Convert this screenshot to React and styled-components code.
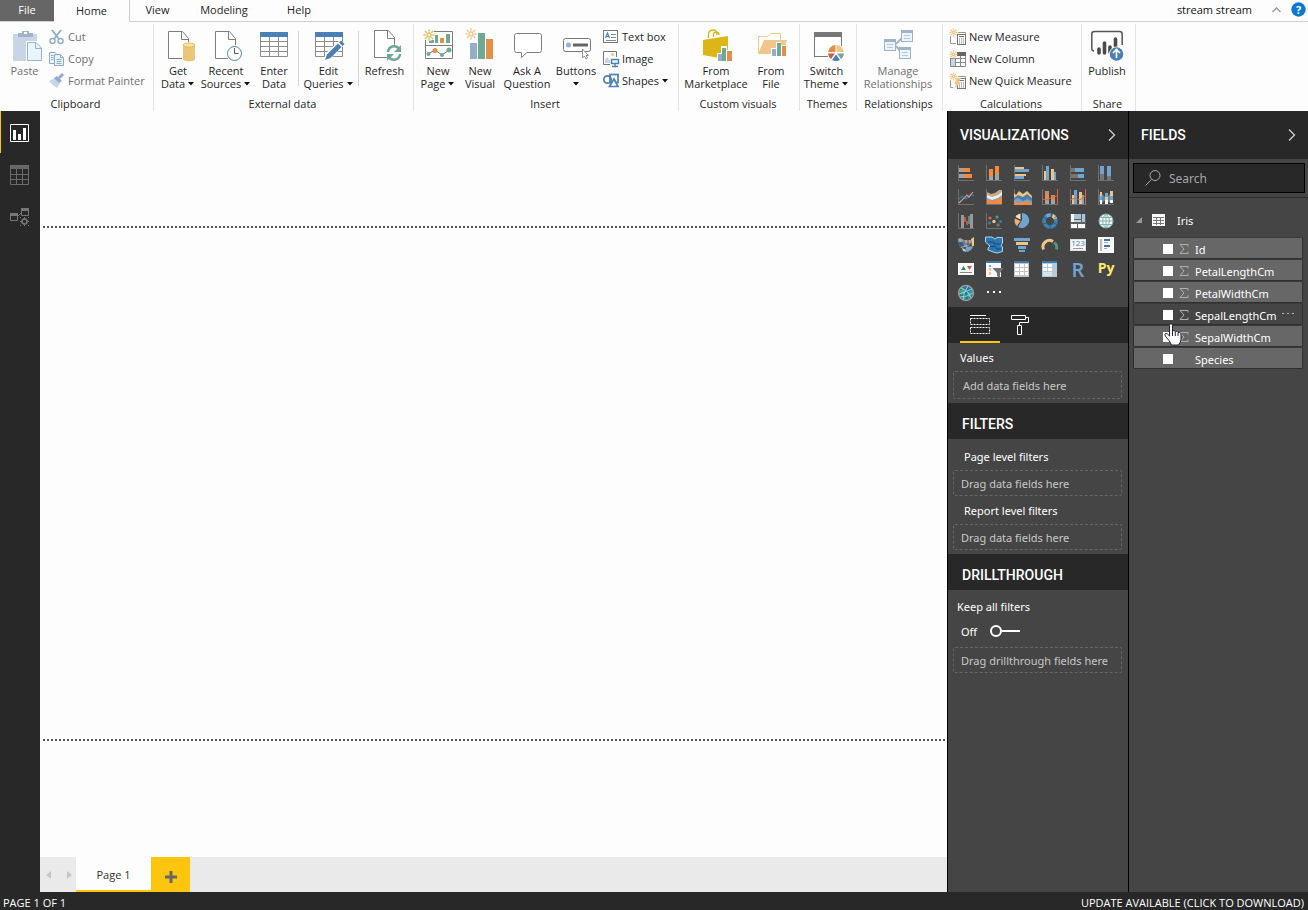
import React from 'react';
import styled, { createGlobalStyle } from 'styled-components';

const GlobalStyle = createGlobalStyle`
    *, *::before, *::after {
        box-sizing: border-box;
    }
    body {
        margin: 0;
        background: #fdfdfd;
        color: #1f1f1f;
        font-family: "Open Sans", "Noto Sans", sans-serif;
        font-size: 11px;
        line-height: 13px;
    }
    button, input {
        font: inherit;
        color: inherit;
        margin: 0;
        padding: 0;
        border: 0;
        background: none;
    }
    svg {
        display: block;
        flex: none;
        overflow: visible;
    }
`;

/* ---------- icon helpers ---------- */

// each bar is [x, y, width, height, colour]
const Bars = ({ items }) =>
    items.map(([x, y, w, h, fill], i) => (
        <rect key={i} x={x} y={y} width={w} height={h} fill={fill} />
    ));

const Icon = ({ size = 16, bars = [], children }) => (
    <svg width={size} height={size} viewBox={`0 0 ${size} ${size}`} aria-hidden="true">
        <Bars items={bars} />
        {children}
    </svg>
);

const Sun = ({ x, y, r = 5, color = '#e9bf55' }) => (
    <g stroke={color} fill="none" strokeWidth="1.4">
        <circle cx={x} cy={y} r={r * 0.4} />
        {[0, 45, 90, 135, 180, 225, 270, 315].map((a) => (
            <path key={a} d={`M${r * 0.65} 0H${r * 1.15}`} transform={`translate(${x} ${y}) rotate(${a})`} />
        ))}
    </g>
);

const Doc = ({ x, y }) => (
    <g transform={`translate(${x} ${y})`} fill="#fff" stroke="#7d7d7d">
        <path d="M.5 .5H14.5L20.5 7.5V27.5H.5Z" />
        <path d="M13.5 .5V8.5H20.5" fill="none" />
    </g>
);

const Caret = () => (
    <svg width="7" height="4" viewBox="0 0 7 4" aria-hidden="true">
        <path d="M0 0H6L3 3.5Z" fill="#111" />
    </svg>
);

const Chevron = () => (
    <svg width="8" height="12" viewBox="0 0 8 12" aria-hidden="true">
        <path d="M1 .5L6.5 6L1 11.5" fill="none" stroke="#cfcfcf" strokeWidth="1.3" />
    </svg>
);

/* ---------- ribbon icons ---------- */

const GREEN = '#6fa894';
const BLUE = '#4a80b5';
const SKY = '#93aecb';
const ORANGE = '#e58e48';
const SAND = '#efc78a';

const PasteIcon = () => (
    <Icon size={32}>
        <path d="M4 4H28V31H4Z" fill="#c9d5e6" />
        <path d="M9 7V3H13V1H20V3H24V7Z" fill="#9fb3cb" />
        <rect x="15" y="2" width="3" height="2" fill="#fff" />
        <path d="M17 11H28V31H17Z" fill="#fdfdfd" />
        <path d="M18.5 12.5H27L32.5 18V30.5H18.5Z" fill="#e9f5fe" stroke="#9db1cb" />
        <path d="M26.5 12.5V18.5H32" fill="none" stroke="#9db1cb" />
    </Icon>
);

const GetDataIcon = () => (
    <Icon size={32}>
        <Doc x={6} y={1} />
        <path d="M20 14Q27 10 34 14V31H20Z" fill="#fff" />
        <path d="M21 15V29C21 32 33 32 33 29V15Z" fill="#ebc677" />
        <ellipse cx="27" cy="15" rx="6" ry="2" fill="#f7e3ae" stroke="#e5b95e" />
    </Icon>
);

const RecentIcon = () => (
    <Icon size={32}>
        <Doc x={5} y={1} />
        <circle cx="24.5" cy="23.5" r="8.5" fill="#fff" />
        <circle cx="24.5" cy="23.5" r="7" fill="#fff" stroke={BLUE} />
        <path d="M24.5 18V23.5H28.5" fill="none" stroke="#555" />
    </Icon>
);

const Grid = () => (
    <g>
        <path d="M2.5 6V26.5H29.5V6M3 11.5H29M3 16.5H29M3 21.5H29M11.5 6V26M20.5 6V26" fill="#fff" stroke="#8c8c8c" />
        <rect x="2" y="2" width="28" height="5" fill={BLUE} />
    </g>
);

const EnterIcon = () => (
    <Icon size={32}>
        <Grid />
    </Icon>
);

const EditIcon = () => (
    <Icon size={32}>
        <Grid />
        <path d="M10 31L13 23L27 10L32 14L18 28Z" fill="#fff" />
        <path d="M12 30L14 24.5L25 13.5L28.5 17L17.5 28Z" fill={BLUE} />
        <path d="M26 12.5L28 10.5L31.5 14L29.5 16Z" fill={BLUE} />
    </Icon>
);

const RefreshIcon = () => (
    <Icon size={32}>
        <Doc x={5} y={0} />
        <circle cx="25" cy="23" r="8.5" fill="#fff" />
        <g fill="none" stroke={GREEN} strokeWidth="2.5">
            <path d="M19 22A6 6 0 0 1 30 19" />
            <path d="M31 24A6 6 0 0 1 20 27" />
        </g>
        <path d="M32 15V22H25ZM18 31V24H25Z" fill={GREEN} />
    </Icon>
);

const NewPageIcon = () => (
    <Icon size={32}>
        <path d="M3.5 1.5H30.5V28.5H3.5ZM3 15.5H31" fill="#fff" stroke="#7d7d7d" />
        <Bars items={[[13, 5, 3, 8, GREEN], [7, 10, 5, 3, GREEN], [18, 8, 4, 5, ORANGE], [24, 4, 4, 9, GREEN]]} />
        <path d="M6 24L13 20L20 25L27 20" fill="none" stroke="#777" />
        <circle cx="6.5" cy="24" r="2" fill={GREEN} />
        <circle cx="13" cy="20.5" r="2.5" fill={ORANGE} />
        <circle cx="20" cy="25" r="2" fill={GREEN} />
        <circle cx="27" cy="20" r="2.5" fill={GREEN} />
        <circle cx="7" cy="5" r="6" fill="#fff" />
        <Sun x={7} y={5} />
    </Icon>
);

const NewVisualIcon = () => (
    <Icon size={32} bars={[[6, 13, 7, 16, SKY], [14, 3, 7, 26, GREEN], [22, 9, 7, 20, ORANGE]]}>
        <Sun x={7} y={4} color={SAND} />
    </Icon>
);

const AskIcon = () => (
    <Icon size={32}>
        <path d="M5.5 3.5H28.5Q30.5 3.5 30.5 5.5V20.5Q30.5 22.5 28.5 22.5H16L10.5 27.5V22.5H5.5Q3.5 22.5 3.5 20.5V5.5Q3.5 3.5 5.5 3.5Z" fill="#fff" stroke="#7d7d7d" />
    </Icon>
);

const ButtonsIcon = () => (
    <Icon size={32}>
        <rect x="3.5" y="8.5" width="27" height="13" rx="2" fill="#fff" stroke="#777" />
        <circle cx="8.5" cy="15" r="2.5" fill="#8eb3d6" />
        <rect x="13" y="13.5" width="15" height="3" fill="#666" />
        <path d="M22.5 19V28L24.5 26L26 29L27.5 28L26 25.5H28.5Z" fill="#fff" stroke="#777" strokeWidth=".8" />
    </Icon>
);

const MarketIcon = () => (
    <Icon size={32}>
        <path d="M3 10L28 6V28L19 28L3 25Z" fill="#dcb516" />
        <path d="M8.5 8V4Q9 0 13 0Q17 0 17 5M13.5 7V4Q14 2 16 2Q19 2 19 5" fill="none" stroke="#dcb516" strokeWidth="1.4" />
        <Bars items={[[17, 23, 5, 8, '#fff'], [21, 16, 6, 15, '#fff'], [26, 20, 7, 11, '#fff'], [18, 24, 4, 7, SKY], [22, 18, 4, 13, GREEN], [27, 21, 5, 10, ORANGE]]} />
    </Icon>
);

const FileVisualIcon = () => (
    <Icon size={32}>
        <path d="M3.5 23V6.5H13L16 3.5H25.5V10" fill="#fff" stroke={SAND} />
        <path d="M3 24L9 10H32L28 24Z" fill={SAND} />
        <Bars items={[[16, 18, 6, 9, '#fff'], [21, 12, 5, 15, '#fff'], [26, 15, 6, 12, '#fff'], [17, 19, 4, 7, SKY], [22, 13, 4, 13, GREEN], [27, 16, 4, 10, ORANGE]]} />
    </Icon>
);

const ThemeIcon = () => (
    <Icon size={32}>
        <rect x="3.5" y="4.5" width="27" height="22" fill="#fff" stroke="#777" />
        <rect x="3" y="2" width="28" height="5" fill="#777" />
        <circle cx="25" cy="23" r="9" fill="#fff" />
        <path d="M25.5 22V15A8 8 0 0 1 33 22Z" fill={SAND} />
        <path d="M24.5 22V15A8 8 0 0 0 17 22Z" fill={ORANGE} />
        <path d="M33 23.5A8 8 0 0 1 30 29L26 23.5Z" fill={GREEN} />
        <path d="M29 30A8 8 0 0 1 21 30L25 24.5Z" fill={BLUE} />
        <path d="M17 23.5A8 8 0 0 0 20 29L24 23.5Z" fill="#cf5f3b" />
    </Icon>
);

const RelationIcon = () => (
    <Icon size={32}>
        <path d="M14 14L20 8M14 16L20 23" stroke="#9fb4cb" strokeWidth="2" />
        {[[19, 0], [2, 9], [17, 17]].map(([x, y]) => (
            <g key={x} transform={`translate(${x} ${y})`}>
                <rect x=".5" y=".5" width="11" height="11" fill="#e9f4fc" stroke="#9fb4cb" />
                <rect width="12" height="3" fill="#9fb4cb" />
                <path d="M3 5.5H9M3 8.5H9" stroke="#b9c6d6" />
            </g>
        ))}
    </Icon>
);

const PublishIcon = () => (
    <Icon size={32}>
        <path d="M3 21Q.8 21 .8 18V4Q.8 1.5 3.5 1.5H28.5Q31.2 1.5 31.2 4V15" fill="none" stroke="#555" strokeWidth="1.5" />
        <g stroke="#4a4a4a" strokeWidth="3.6" strokeLinecap="round">
            <path d="M8 19V23M13.5 13V23M19 17V22M24.5 9V18" />
        </g>
        <circle cx="25.5" cy="24" r="7.5" fill="#fff" />
        <circle cx="25.5" cy="24" r="6.8" fill={BLUE} />
        <path d="M25.5 28V20M22 23L25.5 19.5L29 23" fill="none" stroke="#fff" strokeWidth="1.7" />
    </Icon>
);

const CutIcon = () => (
    <Icon>
        <path d="M3 1L10 10M12 1L5 10" stroke={SKY} strokeWidth="2" />
        <circle cx="3.5" cy="12" r="2.5" fill="none" stroke={SKY} strokeWidth="1.5" />
        <circle cx="11.5" cy="12" r="2.5" fill="none" stroke={SKY} strokeWidth="1.5" />
    </Icon>
);

const CopyIcon = () => (
    <Icon>
        <g fill="#e9f5fe" stroke="#8fa8c6">
            <path d="M.5 1.5H6L8.5 4V12.5H.5Z" />
            <path d="M5.5 3.5H11.5L14.5 6.5V14.5H5.5Z" />
            <path d="M2 4.5H4.5M2 6.5H4.5M2 8.5H4.5M7.5 8.5H12.5M7.5 10.5H12.5M7.5 12.5H12.5M11.5 4V6.5H14" />
        </g>
    </Icon>
);

const PainterIcon = () => (
    <Icon>
        <path d="M0 8L6 5L11 10L8 15Q4 13 0 8Z" fill="#c9d5e6" />
        <path d="M5 5L8 3L13 8L10 10Z" fill={SKY} />
        <path d="M10 5L14 1" stroke={SKY} strokeWidth="3" />
    </Icon>
);

const TextBoxIcon = () => (
    <Icon>
        <rect x=".5" y="1.5" width="14" height="12" fill="#fff" stroke="#777" />
        <path d="M2.5 9L4.5 4L6.5 9M3.3 7.5H5.8" fill="none" stroke={BLUE} strokeWidth="1.2" />
        <path d="M8 5.5H13M8 8.5H13M3 11.5H13" stroke="#888" />
    </Icon>
);

const ImageIcon = () => (
    <Icon>
        <path d="M7 13.5H.5V.5H13.500V6" fill="#fff" stroke="#777" />
        <path d="M2 12V9L4 6L7 10V12Z" fill="#c6d3e2" />
        <circle cx="9.5" cy="3.500" r="1.600" fill={SAND} />
        <rect x="8.500" y="8.500" width="7" height="4" fill="#e9f4fc" stroke={BLUE} strokeWidth="1.400" />
        <path d="M12 13V15M9 15.500H15" stroke={BLUE} strokeWidth="1.400" />
    </Icon>
);

const ShapesIcon = () => (
    <Icon>
        <g fill="none" stroke={BLUE} strokeWidth="1.7">
            <rect x="7" y="1.5" width="8" height="8" />
            <circle cx="4.5" cy="6.5" r="3.7" />
            <path d="M11 6L15 13.5H6.5Z" fill="#fff" />
        </g>
    </Icon>
);

const Calculator = () => (
    <g>
        <rect x="7.5" y="5.5" width="8" height="10" fill="#fff" stroke="#777" />
        <path d="M9 7.5H14" stroke="#777" />
        <path d="M9 10H14.5M9 12H14.5M9 14H14.5" stroke="#777" strokeDasharray="1 1" />
    </g>
);

const MeasureIcon = () => (
    <Icon>
        <path d="M.5 7V14.5H6M8 3.5H15.5V5" fill="none" stroke="#999" />
        <Calculator />
        <Sun x={3.5} y={3.5} r={3.5} color={SAND} />
    </Icon>
);

const ColumnIcon = () => (
    <Icon>
        <path d="M.5 2.5H15.5V15.5H.5ZM5.5 3V15M10.5 3V15M1 7.5H15M1 11.5H15" fill="#fff" stroke="#888" />
        <Bars items={[[1, 8, 4, 7, '#c7d5e6'], [7, 1, 9, 4, '#666'], [0, 0, 7, 7, '#fdfdfd']]} />
        <Sun x={3.5} y={3.5} r={3.5} color={SAND} />
    </Icon>
);

const QuickIcon = () => (
    <Icon>
        <path d="M.5 7V14.5H3M8 3.5H15.5V5" fill="none" stroke="#999" />
        <Calculator />
        <path d="M7 5H11L9 9H11L4 16L6 11H4Z" fill={SAND} />
        <Sun x={3.5} y={3.5} r={3.5} color={SAND} />
    </Icon>
);

/* ---------- visual type icons ---------- */

const O = '#f5893d';
const B = '#6fa5d0';
const D = '#3a79ad';
const Y = '#edc586';
const G = '#a3a3a3';
const W = '#f8f8f8';
const axis = [[0, 0, 1, 16, '#707070'], [0, 15, 16, 1, '#707070']];
const sheet = [[0, 2, 16, 12, W]];

const visuals = [
    { name: 'Stacked bar chart', bars: [...axis, [1, 3, 4, 4, G], [5, 3, 7, 4, O], [1, 9, 6, 4, G], [7, 9, 7, 4, O]] },
    { name: 'Stacked column chart', bars: [...axis, [3, 4, 4, 7, O], [3, 11, 4, 4, G], [9, 1, 4, 8, O], [9, 9, 4, 6, G]] },
    { name: 'Clustered bar chart', bars: [...axis, [1, 2, 9, 2, Y], [1, 4, 14, 3, B], [1, 9, 11, 2, Y], [1, 11, 9, 3, B]] },
    { name: 'Clustered column chart', bars: [...axis, [2, 6, 2, 9, Y], [4, 1, 3, 14, B], [9, 4, 3, 11, Y], [12, 7, 2, 8, B]] },
    { name: '100% stacked bar chart', bars: [...axis, [1, 3, 4, 4, '#757575'], [5, 3, 9, 4, B], [1, 9, 7, 4, '#757575'], [8, 9, 6, 4, B]] },
    { name: '100% stacked column chart', bars: [...axis, [2, 1, 4, 8, B], [2, 9, 4, 6, '#757575'], [9, 1, 4, 10, B], [9, 11, 4, 4, '#757575']] },
    {
        name: 'Line chart', bars: axis,
        art: <g fill="none" strokeWidth="1.2"><path d="M1 10L4 7L8 10L13 5L16 7" stroke="#2f7cb8" /><path d="M1 14L9 6L11 8L15 3" stroke="#d49a8c" /></g>,
    },
    {
        name: 'Area chart', bars: axis,
        art: <g><path d="M1 3L5 5L9 4L13 1H16V15H1Z" fill="#cbab85" /><path d="M1 6L6 8L12 6L16 3V15H1Z" fill="#e9eef0" /><path d="M1 9L6 11L12 9L16 6V15H1Z" fill={B} /><path d="M1 10L6 12L12 10L16 8V15H1Z" fill={O} /></g>,
    },
    {
        name: 'Stacked area chart', bars: axis,
        art: <g><path d="M0 4L2 6L5 2L9 5L13 2L18 7V16H0Z" fill={Y} /><path d="M0 9L4 6L9 8L13 5L18 9V16H0Z" fill="#4e7ea8" /><path d="M0 11L4 9L9 12L13 10L18 12V16H0Z" fill={B} /><path d="M0 12L4 14L9 13L13 12L18 15V16H0Z" fill={O} /></g>,
    },
    {
        name: 'Line and stacked column chart', bars: [...axis, [3, 2, 4, 8, '#d48c5e'], [3, 10, 4, 5, G], [9, 6, 4, 5, '#d48c5e'], [9, 11, 4, 4, G], [15, 0, 1, 16, '#d9673b']],
        art: <path d="M0 10L5 11L10 8L15 7" fill="none" stroke="#d9673b" />,
    },
    {
        name: 'Line and clustered column chart', bars: [...axis, [2, 6, 2, 9, Y], [4, 1, 3, 14, B], [9, 3, 3, 12, Y], [12, 6, 2, 9, B], [15, 0, 1, 16, '#d9673b']],
        art: <path d="M0 11L5 9L10 11L15 7" fill="none" stroke="#d9673b" />,
    },
    {
        name: 'Ribbon chart', bars: axis,
        art: <g><path d="M1 6L4 5L8 9L12 5L15 6V14H12L8 11L4 14L1 13Z" fill="#5f86a6" /><Bars items={[[2, 3, 2, 4, Y], [2, 7, 2, 4, B], [2, 11, 2, 4, W], [7, 4, 3, 4, B], [7, 8, 3, 3, Y], [7, 11, 3, 4, W], [12, 2, 3, 5, Y], [12, 7, 3, 4, B], [12, 11, 3, 3, W]]} /></g>,
    },
    { name: 'Waterfall chart', bars: [...axis, [3, 2, 3, 13, '#999'], [6, 4, 2, 5, '#c65345'], [8, 8, 2, 4, '#c65345'], [10, 3, 2, 8, '#528f83'], [12, 1, 3, 14, '#999']] },
    {
        name: 'Scatter chart', bars: axis,
        art: <g><circle cx="4" cy="5" r="1.600" fill="#d8634c" /><circle cx="11" cy="4" r="1.600" fill="#4a9d8e" /><circle cx="8" cy="8.500" r="1.700" fill={Y} /><circle cx="14.500" cy="8.500" r="1.500" fill={D} /><circle cx="3.500" cy="10" r="1.600" fill={D} /><circle cx="12" cy="12" r="1.700" fill="#777" /></g>,
    },
    {
        name: 'Pie chart',
        art: <g><path d="M8 7V0A7.500 7.500 0 1 1 4 14Z" fill={B} /><path d="M6.500 6.500V.5A7 7 0 0 0 1.500 4Z" fill="#f6ddc2" /><path d="M6.500 8L1 5.500A7 7 0 0 0 3 13Z" fill="#f2ab73" /></g>,
    },
    {
        name: 'Donut chart',
        art: <g fill="none" strokeWidth="3.6"><circle cx="8" cy="8" r="6" stroke="#3984bb" /><path d="M10.500 2.600A6 6 0 0 1 13.500 5.700" stroke={Y} /><path d="M4.500 3.200A6 6 0 0 1 9 2.100" stroke={B} /><path d="M9.200 0V4M1 4L4.500 6M12 5L15 3M8 12V16M1 11L4.500 10M15 11.500L12 10" stroke="#454545" strokeWidth=".7" /></g>,
    },
    { name: 'Treemap', bars: [[0, 1, 16, 15, '#606060'], [1, 1, 3, 8, W], [4, 1, 7, 5, '#a5c3da'], [4, 7, 7, 2, '#bed4e4'], [12, 1, 3, 8, '#a5c3da'], [1, 11, 6, 4, W], [8, 11, 7, 4, W]] },
    {
        name: 'Map',
        art: <g><circle cx="8" cy="8" r="7" fill={W} stroke="#7fb2cb" /><path d="M8 1V15M1 8H15M2.500 4.500H13.500M2.500 11.500H13.500M8 1C3.500 5 3.500 11 8 15M8 1C12.500 5 12.500 11 8 15" fill="none" stroke="#7eb5a8" /></g>,
    },
    {
        name: 'Filled map',
        art: <g><path d="M0 2L2 1L6 3H13V6L10 10H7L3 11L1 8Z" fill={G} /><path d="M0 5H5L6 9L2 10Z" fill="#2d618c" /><path d="M13 2L16 0V9H14Z" fill={Y} /><path d="M8 10L15 9L14 12L10 15L7 14Z" fill={B} /><path d="M4 11L7 12L8 15L5 14Z" fill="#c4c4c4" /><path d="M6 3V7H13M10 3V10" fill="none" stroke="#5a5a5a" /></g>,
    },
    {
        name: 'Shape map',
        art: <g fill="#2b77b0" stroke="#a8d5ee"><path d="M-.5 0H6L9 2L11 .5H16.500V6L15 8L16.500 10V14.500L11 16L7 15L2 13V11L4 9L-.5 5Z" /><path d="M2 5H8V7H15M4 9.500H9L11 12H15" fill="none" stroke="#153d5c" strokeWidth=".8" /></g>,
    },
    { name: 'Funnel', bars: [[0, 1, 16, 3, B], [2, 5, 12, 3, Y], [4, 9, 8, 3, B], [5, 13, 6, 2, B]] },
    {
        name: 'Gauge',
        art: <g fill="none" strokeWidth="3"><path d="M1.5 12.5A6.5 6.5 0 0 1 11 4.500" stroke={Y} /><path d="M12 5.500A6.500 6.500 0 0 1 14.500 12.500" stroke="#4d9585" /></g>,
    },
    {
        name: 'Card', bars: [[0, 2, 16, 12, '#ddd'], [1, 3, 14, 10, W]],
        art: <g><text x="8" y="9" fontSize="8" textAnchor="middle" fill="#3a84bb">123</text><path d="M3 11.5H13" stroke="#999" /></g>,
    },
    { name: 'Multi-row card', bars: [[0, 0, 16, 16, W], [2, 2, 2, 12, '#bbb'], [6, 2, 6, 2, D], [6, 5, 4, 1, '#aaa'], [6, 8, 6, 2, D], [6, 11, 3, 1, '#aaa']] },
    {
        name: 'KPI', bars: sheet,
        art: <g><path d="M3 9L5.5 5L8 9Z" fill="#378873" /><path d="M9 5H14L11.5 9Z" fill="#cf5947" /><path d="M2 11.5H14" stroke="#888" /></g>,
    },
    {
        name: 'Slicer', bars: [[0, 0, 15, 16, W], [0, 0, 15, 2, D], [3, 4, 2, 2, B], [3, 7, 2, 3, Y], [3, 11, 2, 3, Y]],
        art: <path d="M6.500 7H17.500L14 12V17L11 15V12Z" fill="#707070" />,
    },
    { name: 'Table', bars: [[0, 0, 15, 16, '#c4c4c4'], [0, 0, 15, 2, D], ...[3, 7, 11].flatMap((y) => [1, 6, 11].map((x) => [x, y, x === 11 ? 3 : 4, 3, '#fff']))] },
    { name: 'Matrix', bars: [[0, 0, 15, 16, '#b4cbd8'], [0, 0, 15, 2, D], ...[3, 7].flatMap((y) => [1, 6].map((x) => [x, y, 4, 3, '#fff'])), [1, 11, 9, 4, '#d7e6ee']] },
    { name: 'R script visual', art: <text x="8" y="16" textAnchor="middle" fontSize="20" fontWeight="600" fill={B}>R</text> },
    { name: 'Python visual', art: <text x="8" y="12" textAnchor="middle" fontSize="14" fontWeight="700" fill="#ffe96b">Py</text> },
    {
        name: 'ArcGIS map',
        art: <g><circle cx="8" cy="8" r="7.5" fill="#1d76ae" stroke="#9a9a9a" strokeWidth="1.400" /><path d="M2 6Q5 2 8 5L6 9L3 10ZM9 8L14 5L13 11L10 14ZM4 12L8 11L7 15Z" fill="#2fae7f" /><path d="M3 3Q10 5 13 13M1 9Q7 7 14 4M5 15Q5 8 10 1M2 12Q9 12 15 8" fill="none" stroke="#b8cccc" strokeWidth=".9" /></g>,
    },
    { name: 'More visuals', bars: [[1, 6, 2, 2, W], [7, 6, 2, 2, W], [13, 6, 2, 2, W]] },
];

/* ---------- page shell ---------- */

const Shell = styled.div`
    display: flex;
    flex-direction: column;
    min-height: 100vh;
`;

const TabBar = styled.nav`
    display: flex;
    align-items: stretch;
    height: 22px;
    border-bottom: 1px solid #cfcfcf;
`;

const RibbonTab = styled.button`
    width: ${({ $width }) => $width}px;
    padding-bottom: 2px;
    color: ${({ $file }) => ($file ? '#fff' : '#1f1f1f')};
    background: ${({ $file }) => ($file ? '#666' : '#fdfdfd')};
    ${({ $active }) => $active && `
        border-right: 1px solid #cfcfcf;
        margin-bottom: -1px;
    `}
`;

const Account = styled.div`
    display: flex;
    align-items: center;
    margin-left: auto;
    padding: 0 2px 2px 0;
    color: #111;
    button {
        margin-left: 20px;
    }
    button + button {
        margin-left: 10px;
    }
`;

const Ribbon = styled.header`
    display: flex;
    height: 89px;
    padding-top: 2px;
`;

const Group = styled.section`
    display: flex;
    flex-direction: column;
    min-width: ${({ $width }) => $width}px;
    border-right: 1px solid #e3e3e3;
`;

const GroupTools = styled.div`
    display: flex;
    height: 72px;
`;

const GroupName = styled.h2`
    margin: 0;
    padding-right: 2px;
    font-size: 11px;
    font-weight: 400;
    line-height: 15px;
    text-align: center;
    white-space: nowrap;
`;

const Tool = styled.button`
    display: flex;
    flex-direction: column;
    align-items: center;
    width: ${({ $width }) => $width}px;
    padding-top: 6px;
    white-space: nowrap;
    color: ${({ $off }) => ($off ? '#6f6f6f' : 'inherit')};
    svg + span {
        margin-top: 2px;
    }
`;

const ToolLine = styled.span`
    display: flex;
    align-items: center;
    gap: 3px;
    min-height: 13px;
`;

const ToolDivider = styled.div`
    width: 1px;
    height: 55px;
    margin-top: 7px;
    background: #d4d4d4;
`;

const ToolStack = styled.div`
    display: flex;
    flex-direction: column;
    padding: 2px 0 0 ${({ $indent }) => $indent}px;
`;

const SmallTool = styled.button`
    display: flex;
    align-items: center;
    gap: 3px;
    height: 22px;
    white-space: nowrap;
    color: ${({ $off }) => ($off ? '#6f6f6f' : 'inherit')};
    span {
        padding-bottom: 2px;
    }
`;

const Main = styled.main`
    display: flex;
    flex: 1;
`;

const Rail = styled.nav`
    width: 40px;
    background: #282828;
`;

const RailButton = styled.button`
    display: flex;
    align-items: center;
    width: 100%;
    height: 42px;
    padding: 2px 0 0 9px;
    border-left: 1px solid ${({ $active }) => ($active ? '#fdc50d' : 'transparent')};
`;

const Report = styled.section`
    display: flex;
    flex: 1;
    flex-direction: column;
    min-width: 0;
`;

const Page = styled.div`
    flex: 1;
    margin: 115px 2px 116px 3px;
    border: 0 dotted #555;
    border-width: 2px 0;
`;

const Pages = styled.nav`
    display: flex;
    height: 35px;
    background: #eaeaea;
`;

const PageArrows = styled.div`
    display: flex;
    justify-content: space-between;
    width: 36px;
    padding: 0 4px 0 6px;
`;

const PageTab = styled.button`
    width: 75px;
    padding-top: 2px;
    background: #fdfdfd;
    border-bottom: 2px solid #fdc50d;
    color: #333;
`;

const AddPage = styled.button`
    display: flex;
    align-items: center;
    justify-content: center;
    width: 39px;
    padding-top: 4px;
    background: #fdc50d;
`;

const Panel = styled.aside`
    width: ${({ $width }) => $width}px;
    background: #454545;
    border-left: 1px solid #000;
    color: #fff;
    font-family: "Noto Sans", "Open Sans", sans-serif;
`;

const PanelHead = styled.div`
    display: flex;
    align-items: center;
    justify-content: space-between;
    height: ${({ $tall }) => ($tall ? 48 : 36)}px;
    padding: ${({ $tall }) => ($tall ? '0 12px 0 12px' : '6px 14px 0')};
    background: #282828;
    h2 {
        margin: 0;
        font: 500 14px/16px Roboto, sans-serif;
        color: #fff;
    }
`;

const VisualGrid = styled.div`
    display: grid;
    grid-template-columns: repeat(6, 28px);
    grid-auto-rows: 24px;
    padding: 2px 4px;
    font-family: "Open Sans", sans-serif;
    button {
        display: grid;
        place-items: center;
    }
`;

const PaneTabs = styled.div`
    display: flex;
    height: 36px;
    padding-left: 12px;
    background: #282828;
`;

const PaneTab = styled.button`
    display: grid;
    place-items: center;
    width: 40px;
    padding-top: 2px;
    border-bottom: 2px solid ${({ $active }) => ($active ? '#fdc50d' : 'transparent')};
`;

const Well = styled.div`
    padding: ${({ $pad }) => $pad};
`;

const WellName = styled.div`
    padding: 0 0 0 ${({ $indent }) => $indent}px;
    line-height: 14px;
`;

const DropZone = styled.div`
    display: flex;
    align-items: center;
    height: ${({ $tall }) => ($tall ? 28 : 26)}px;
    margin: ${({ $gap }) => $gap}px 6px 0 5px;
    padding-left: ${({ $tall }) => ($tall ? 9 : 7)}px;
    border: 1px dashed #666;
    border-radius: 2px;
    color: #c8c8c8;
    white-space: nowrap;
`;

const SwitchRow = styled.label`
    display: flex;
    align-items: center;
    gap: 13px;
    height: 16px;
    margin: 9px 0 0 13px;
`;

const Switch = styled.input`
    display: flex;
    align-items: center;
    width: 30px;
    height: 12px;
    appearance: none;
    &::before {
        content: "";
        width: 12px;
        height: 12px;
        border: 2px solid #fff;
        border-radius: 50%;
    }
    &::after {
        content: "";
        flex: 1;
        height: 2px;
        background: #fff;
    }
`;

const SearchArea = styled.div`
    padding: 4px 3px 4px 4px;
    border-bottom: 1px solid #2c2c2c;
`;

const SearchBox = styled.label`
    display: flex;
    align-items: center;
    gap: 8px;
    height: 30px;
    padding-left: 11px;
    border: 1px solid #000;
    background: #282828;
    input {
        flex: 1;
        min-width: 0;
        font-size: 12px;
        outline: none;
    }
    input::placeholder {
        color: #a6a6a6;
        opacity: 1;
    }
`;

const TableName = styled.button`
    display: flex;
    align-items: center;
    height: 20px;
    margin: 12px 0 7px 7px;
    svg + svg {
        margin: 0 12px 0 10px;
    }
`;

const FieldList = styled.ul`
    margin: 0;
    padding: 0 5px 0 4px;
    list-style: none;
`;

const Field = styled.li`
    position: relative;
    display: flex;
    align-items: center;
    height: 22px;
    padding-left: 29px;
    border: 1px solid #2f2f2f;
    border-top-color: #3a3a3a;
    border-radius: 2px;
    background: ${({ $hover }) => ($hover ? '#454545' : '#676767')};
    label {
        display: flex;
        align-items: center;
        flex: 1;
        gap: 6px;
        padding-top: 1px;
        white-space: nowrap;
        font-size: 11px;
    }
    span {
        padding-top: 2px;
    }
    input {
        width: 10px;
        height: 10px;
        appearance: none;
        background: #fff;
    }
`;

const FieldMenu = styled.button`
    position: absolute;
    right: 7px;
    top: 3px;
    height: 10px;
`;

const Pointer = styled.svg`
    position: absolute;
    z-index: 1;
    left: 30px;
    top: 19px;
`;

const Status = styled.footer`
    display: flex;
    justify-content: space-between;
    height: 18px;
    padding: 4px 4px 0 3px;
    background: #282828;
    color: #fff;
    button {
        height: 13px;
    }
`;

/* ---------- parts ---------- */

const BigTool = ({ icon, lines, width, menu, off }) => (
    <Tool $width={width} $off={off} disabled={off}>
        {icon}
        {lines.map((line, i) => (
            <ToolLine key={i}>
                {line}
                {menu && i === lines.length - 1 && <Caret />}
            </ToolLine>
        ))}
    </Tool>
);

const RowTool = ({ icon, text, menu, off }) => (
    <SmallTool $off={off} disabled={off}>
        {icon}
        <span>{text}</span>
        {menu && <Caret />}
    </SmallTool>
);

const RibbonGroup = ({ name, width, children }) => (
    <Group $width={width}>
        <GroupTools>{children}</GroupTools>
        <GroupName>{name}</GroupName>
    </Group>
);

const tabs = [
    { name: 'File', width: 54, file: true },
    { name: 'Home', width: 76, active: true },
    { name: 'View', width: 55 },
    { name: 'Modeling', width: 78 },
    { name: 'Help', width: 72 },
];

const fields = [
    { name: 'Id', sum: true },
    { name: 'PetalLengthCm', sum: true },
    { name: 'PetalWidthCm', sum: true },
    { name: 'SepalLengthCm', sum: true, hover: true },
    { name: 'SepalWidthCm', sum: true },
    { name: 'Species' },
];

const TopTabs = () => (
    <TabBar>
        {tabs.map((tab) => (
            <RibbonTab key={tab.name} $width={tab.width} $file={tab.file} $active={tab.active}>
                {tab.name}
            </RibbonTab>
        ))}
        <Account>
            <span>stream stream</span>
            <button aria-label="Collapse ribbon">
                <svg width="9" height="6" viewBox="0 0 9 6"><path d="M.5 5L4.5 1L8.5 5" fill="none" stroke="#999" strokeWidth="1.3" /></svg>
            </button>
            <button aria-label="Help">
                <svg width="15" height="15" viewBox="0 0 15 15">
                    <circle cx="7.5" cy="7.5" r="7.2" fill="#0a78d4" />
                    <text x="7.5" y="11.5" textAnchor="middle" fontSize="11" fontWeight="700" fill="#fff">?</text>
                </svg>
            </button>
        </Account>
    </TabBar>
);

const HomeRibbon = () => (
    <Ribbon>
        <RibbonGroup name="Clipboard" width={154}>
            <BigTool icon={<PasteIcon />} lines={['Paste']} width={49} off />
            <ToolStack $indent={0}>
                <RowTool icon={<CutIcon />} text="Cut" off />
                <RowTool icon={<CopyIcon />} text="Copy" off />
                <RowTool icon={<PainterIcon />} text="Format Painter" off />
            </ToolStack>
        </RibbonGroup>
        <RibbonGroup name="External data" width={260}>
            <BigTool icon={<GetDataIcon />} lines={['Get', 'Data']} width={48} menu />
            <BigTool icon={<RecentIcon />} lines={['Recent', 'Sources']} width={48} menu />
            <BigTool icon={<EnterIcon />} lines={['Enter', 'Data']} width={48} />
            <ToolDivider />
            <BigTool icon={<EditIcon />} lines={['Edit', 'Queries']} width={59} menu />
            <ToolDivider />
            <BigTool icon={<RefreshIcon />} lines={['Refresh']} width={51} />
        </RibbonGroup>
        <RibbonGroup name="Insert" width={265}>
            <BigTool icon={<NewPageIcon />} lines={['New', 'Page']} width={48} menu />
            <BigTool icon={<NewVisualIcon />} lines={['New', 'Visual']} width={36} />
            <BigTool icon={<AskIcon />} lines={['Ask A', 'Question']} width={58} />
            <BigTool icon={<ButtonsIcon />} lines={['Buttons', '']} width={40} menu />
            <ToolStack $indent={7}>
                <RowTool icon={<TextBoxIcon />} text="Text box" />
                <RowTool icon={<ImageIcon />} text="Image" />
                <RowTool icon={<ShapesIcon />} text="Shapes" menu />
            </ToolStack>
        </RibbonGroup>
        <RibbonGroup name="Custom visuals" width={121}>
            <BigTool icon={<MarketIcon />} lines={['From', 'Marketplace']} width={74} />
            <BigTool icon={<FileVisualIcon />} lines={['From', 'File']} width={36} />
        </RibbonGroup>
        <RibbonGroup name="Themes" width={57}>
            <BigTool icon={<ThemeIcon />} lines={['Switch', 'Theme']} width={53} menu />
        </RibbonGroup>
        <RibbonGroup name="Relationships" width={86}>
            <BigTool icon={<RelationIcon />} lines={['Manage', 'Relationships']} width={82} off />
        </RibbonGroup>
        <RibbonGroup name="Calculations" width={139}>
            <ToolStack $indent={7}>
                <RowTool icon={<MeasureIcon />} text="New Measure" />
                <RowTool icon={<ColumnIcon />} text="New Column" />
                <RowTool icon={<QuickIcon />} text="New Quick Measure" />
            </ToolStack>
        </RibbonGroup>
        <RibbonGroup name="Share" width={54}>
            <BigTool icon={<PublishIcon />} lines={['Publish']} width={50} />
        </RibbonGroup>
    </Ribbon>
);

const ViewRail = () => (
    <Rail>
        <RailButton $active aria-label="Report">
            <Icon size={20} bars={[[3, 7, 3, 10, '#fff'], [8, 11, 3, 6, '#fff'], [13, 5, 3, 12, '#fff']]}>
                <path d="M.5 1.5H18.5V18.5H.5Z" fill="none" stroke="#fff" />
            </Icon>
        </RailButton>
        <RailButton aria-label="Data">
            <Icon size={20} bars={[[0, 0, 19, 4, '#666']]}>
                <path d="M.5 .5H18.5V19.5H.5ZM0 9.5H19M0 14.5H19M6.5 4V19M12.5 4V19" fill="none" stroke="#6b6b6b" />
            </Icon>
        </RailButton>
        <RailButton aria-label="Relationships">
            <Icon size={20} bars={[[0, 6, 8, 3, '#777'], [11, 1, 8, 3, '#777']]}>
                <path d="M.5 6.5H7.5V13.5H.5ZM11.5 1.5H18.5V8.5H11.5ZM8 9L11 6" fill="none" stroke="#777" />
                <circle cx="14.5" cy="14.5" r="2.5" fill="none" stroke="#777" strokeWidth="1.5" />
                <path d="M14.5 10V12M14.5 17V19M10 14.5H12M17 14.5H19" stroke="#777" />
                <Bars items={[[10, 10, 1, 1, '#777'], [18, 10, 1, 1, '#777'], [10, 18, 1, 1, '#777'], [18, 18, 1, 1, '#777']]} />
            </Icon>
        </RailButton>
    </Rail>
);

const ReportCanvas = () => (
    <Report>
        <Page />
        <Pages>
            <PageArrows>
                <button aria-label="Previous page"><svg width="5" height="8" viewBox="0 0 5 8"><path d="M5 0V8L0 4Z" fill="#c6c6c6" /></svg></button>
                <button aria-label="Next page"><svg width="5" height="8" viewBox="0 0 5 8"><path d="M0 0V8L5 4Z" fill="#c6c6c6" /></svg></button>
            </PageArrows>
            <PageTab>Page 1</PageTab>
            <AddPage aria-label="New page">
                <svg width="12" height="12" viewBox="0 0 12 12"><path d="M6 0V12M0 6H12" stroke="#666" strokeWidth="3" /></svg>
            </AddPage>
        </Pages>
    </Report>
);

const VisualizationsPanel = () => (
    <Panel $width={181}>
        <PanelHead $tall>
            <h2>VISUALIZATIONS</h2>
            <button aria-label="Collapse visualizations"><Chevron /></button>
        </PanelHead>
        <VisualGrid>
            {visuals.map(({ name, bars, art }) => (
                <button key={name} aria-label={name}>
                    <Icon bars={bars}>{art}</Icon>
                </button>
            ))}
        </VisualGrid>
        <PaneTabs>
            <PaneTab $active aria-label="Fields">
                <svg width="20" height="20" viewBox="0 0 20 20">
                    <path d="M0 .5H16" stroke="#fff" />
                    <path d="M.5 3.5H19.5V9.5H.5ZM.5 12.5H19.5V18.5H.5Z" fill="none" stroke="#fff" strokeDasharray="2 1" />
                </svg>
            </PaneTab>
            <PaneTab aria-label="Format">
                <svg width="18" height="20" viewBox="0 0 18 20">
                    <path d="M.5 .5H14.5V4.5H.5ZM14.5 2.5H17.5V7.5H8.5V10M6.5 10.5H10.5V19.5H6.5Z" fill="none" stroke="#fff" />
                </svg>
            </PaneTab>
        </PaneTabs>
        <Well $pad="8px 0 4px">
            <WellName $indent={12}>Values</WellName>
            <DropZone $tall $gap={6}>Add data fields here</DropZone>
        </Well>
        <PanelHead><h2>FILTERS</h2></PanelHead>
        <Well $pad="11px 0 4px">
            <WellName $indent={16}>Page level filters</WellName>
            <DropZone $gap={6}>Drag data fields here</DropZone>
            <Well $pad="8px 0 0">
                <WellName $indent={16}>Report level filters</WellName>
                <DropZone $gap={6}>Drag data fields here</DropZone>
            </Well>
        </Well>
        <PanelHead><h2>DRILLTHROUGH</h2></PanelHead>
        <Well $pad="10px 0 4px">
            <WellName $indent={9}>Keep all filters</WellName>
            <SwitchRow>
                Off
                <Switch type="checkbox" role="switch" />
            </SwitchRow>
            <DropZone $gap={8}>Drag drillthrough fields here</DropZone>
        </Well>
    </Panel>
);

const FieldsPanel = () => (
    <Panel $width={180}>
        <PanelHead $tall>
            <h2>FIELDS</h2>
            <button aria-label="Collapse fields"><Chevron /></button>
        </PanelHead>
        <SearchArea>
            <SearchBox>
                <svg width="16" height="16" viewBox="0 0 16 16" aria-hidden="true">
                    <circle cx="10" cy="5.5" r="5" fill="none" stroke="#aaa" />
                    <path d="M6.5 9.5L.5 15.5" stroke="#aaa" />
                </svg>
                <input type="search" placeholder="Search" aria-label="Search" />
            </SearchBox>
        </SearchArea>
        <TableName>
            <svg width="6" height="6" viewBox="0 0 6 6"><path d="M6 0V6H0Z" fill="#999" /></svg>
            <Icon size={13} bars={[[0, 0, 13, 12, W], ...[3, 6, 9].flatMap((y) => [[1, y, 11, 1, '#777']]), [4, 3, 1, 8, '#777'], [8, 3, 1, 8, '#777']]} />
            Iris
        </TableName>
        <FieldList>
            {fields.map((field) => (
                <Field key={field.name} $hover={field.hover}>
                    <label>
                        <input type="checkbox" />
                        <svg width="10" height="10" viewBox="0 0 10 10" aria-hidden="true">
                            {field.sum && <path d="M9 2.5V.5H1L5 5L1 9.5H9V7.5" fill="none" stroke="#b0b0b0" />}
                        </svg>
                        <span>{field.name}</span>
                    </label>
                    {field.hover && (
                        <>
                            <FieldMenu aria-label="More options">
                                <Icon size={13} bars={[[0, 6, 2, 1, '#bbb'], [5, 6, 2, 1, '#bbb'], [10, 6, 2, 1, '#bbb']]} />
                            </FieldMenu>
                            <Pointer width="18" height="23" viewBox="0 0 18 23" aria-hidden="true">
                                <path d="M5.5 13V2.5Q5.5 .7 7 .7Q8.5 .7 8.5 2.5V8Q10 6.7 11.3 8.5Q13 7.5 14 9.5Q17 8.5 17 12V16Q17 19 14.5 22H7.5Q6 18 2 14Q0 11.5 1.5 10.5Q3 9.8 5.5 13Z" fill="#fff" stroke="#222238" />
                                <path d="M8.5 8V13M11.3 9V13M14 10V13" stroke="#222238" />
                            </Pointer>
                        </>
                    )}
                </Field>
            ))}
        </FieldList>
    </Panel>
);

const App = () => {
    return (
        <Shell>
            <GlobalStyle />
            <TopTabs />
            <HomeRibbon />
            <Main>
                <ViewRail />
                <ReportCanvas />
                <VisualizationsPanel />
                <FieldsPanel />
            </Main>
            <Status>
                <span>PAGE 1 OF 1</span>
                <button>UPDATE AVAILABLE (CLICK TO DOWNLOAD)</button>
            </Status>
        </Shell>
    );
};

export default App;
